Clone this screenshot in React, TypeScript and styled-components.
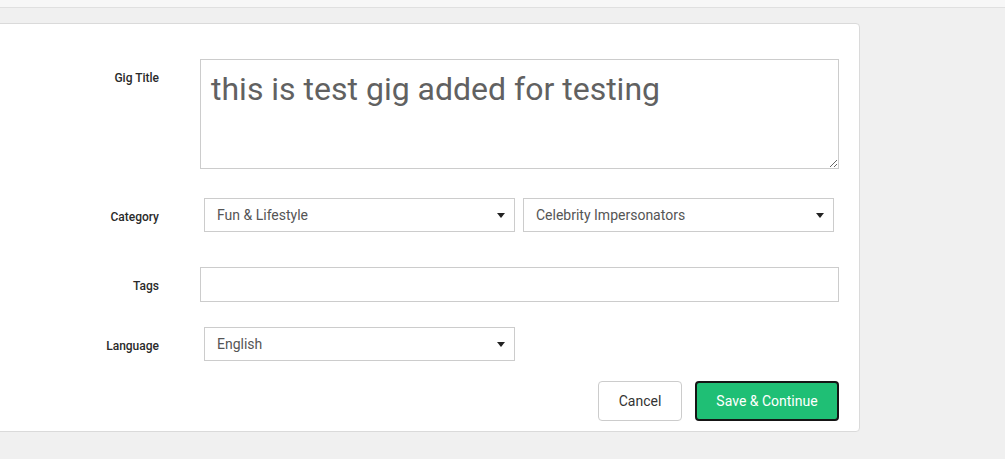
import React from 'react'
import styled, { createGlobalStyle } from 'styled-components'

const GlobalStyle = createGlobalStyle`
    html, body {
        margin: 0;
        padding: 0;
        background: #f0f0f0;
        font-family: Roboto, "Liberation Sans", Arial, sans-serif;
        overflow: hidden;
    }
`

const TopBar = styled.div`
    height: 7px;
    background: #f7f7f7;
    border-bottom: 1px solid #e0e0e0;
`

const Card = styled.div`
    margin: 15px 0 0 -6px;
    width: 866px;
    box-sizing: border-box;
    background: #fff;
    border: 1px solid #dadada;
    border-radius: 4px;
    padding: 35px 20px 10px 0;
`

const Row = styled.div<{ $mt?: number; $align?: string }>`
    display: grid;
    grid-template-columns: 164px 1fr;
    column-gap: 41px;
    align-items: ${p => p.$align || 'center'};
    margin-top: ${p => p.$mt || 0}px;
`

const Label = styled.label<{ $pt?: number }>`
    text-align: right;
    font-size: 12px;
    font-weight: 500;
    color: #2a2a2a;
    padding-top: ${p => p.$pt ?? 3}px;
`

const TextArea = styled.textarea`
    display: block;
    width: 100%;
    height: 110px;
    box-sizing: border-box;
    border: 1px solid #ccc;
    padding: 10px 10px;
    font-family: Roboto, "Liberation Sans", Arial, sans-serif;
    font-size: 32px;
    color: #616161;
    resize: vertical;
    outline: none;
`

const TextInput = styled.input`
    display: block;
    width: 100%;
    height: 35px;
    box-sizing: border-box;
    border: 1px solid #ccc;
    padding: 0 12px;
    font-family: inherit;
    font-size: 14px;
    outline: none;
`

const SelectGroup = styled.div`
    display: flex;
    gap: 8px;
    padding-left: 4px;
`

const SelectBox = styled.div`
    position: relative;
    width: 311px;
    height: 34px;
    box-sizing: border-box;
    border: 1px solid #ccc;
    display: flex;
    align-items: center;
    padding: 0 12px;
    font-size: 14px;
    color: #555;
    background: #fff;
`

const Caret = styled.span`
    position: absolute;
    right: 9px;
    top: 14px;
    width: 0;
    height: 0;
    border-left: 4.5px solid transparent;
    border-right: 4.5px solid transparent;
    border-top: 5px solid #222;
`

const Actions = styled.div`
    display: flex;
    justify-content: flex-end;
    gap: 13px;
    margin-top: 20px;
`

const Button = styled.button<{ $primary?: boolean }>`
    height: 40px;
    box-sizing: border-box;
    border-radius: 4px;
    font-family: inherit;
    font-size: 14px;
    cursor: pointer;
    padding: 0;
    background: ${p => (p.$primary ? '#1fbf75' : '#fff')};
    color: ${p => (p.$primary ? '#fff' : '#333')};
    border: ${p => (p.$primary ? '2px solid #151515' : '1px solid #ccc')};
    width: ${p => (p.$primary ? 144 : 84)}px;
`

const Select = ({ value }: { value: string }) => (
    <SelectBox>
        {value}
        <Caret />
    </SelectBox>
)

const App = () => {
    return (
        <>
            <GlobalStyle />
            <TopBar />
            <Card>
                <Row $align="start">
                    <Label $pt={12}>Gig Title</Label>
                    <TextArea defaultValue="this is test gig added for testing" />
                </Row>
                <Row $mt={29}>
                    <Label>Category</Label>
                    <SelectGroup>
                        <Select value="Fun & Lifestyle" />
                        <Select value="Celebrity Impersonators" />
                    </SelectGroup>
                </Row>
                <Row $mt={35}>
                    <Label $pt={2}>Tags</Label>
                    <TextInput />
                </Row>
                <Row $mt={25}>
                    <Label $pt={4}>Language</Label>
                    <SelectGroup>
                        <Select value="English" />
                    </SelectGroup>
                </Row>
                <Actions>
                    <Button>Cancel</Button>
                    <Button $primary>Save &amp; Continue</Button>
                </Actions>
            </Card>
        </>
    )
}

export default App
